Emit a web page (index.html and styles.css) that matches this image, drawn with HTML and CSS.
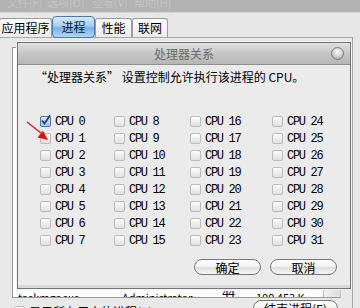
FILE: index.html
```html
<!DOCTYPE html>
<html>
  <head>
    <meta charset="utf-8" />
    <title>Windows 任务管理器 - 处理器关系</title>
    <link rel="stylesheet" href="styles.css">
  </head>
  <body>
    <div id="screen">
      <div id="menubar">
        <span>文件(F)</span>
        <span>选项(O)</span>
        <span>查看(V)</span>
        <span>帮助(H)</span>
      </div>

      <div id="tabs">
        <div class="tab apps">应用程序</div>
        <div class="tab procs selected">进程</div>
        <div class="tab perf">性能</div>
        <div class="tab net">联网</div>
      </div>

      <div id="page">
        <div id="processList">
          <div class="rows">
            <div class="row">
              <span class="name">taskmgr.exe</span>
              <span class="user">Administrator</span>
              <span class="cpu">44</span>
              <span class="mem">100 453 K</span>
            </div>
          </div>
          <div class="vscroll"></div>
        </div>
        <div id="pageFoot">
          <label class="showAll"><span class="cb"></span>显示所有用户的进程(S)</label>
          <button class="aqua endProc">结束进程(E)</button>
        </div>
      </div>

      <!-- dialog sits over the task manager window -->
      <div id="affinity">
        <div class="titlebar">
          <span></span>
          <span class="title">处理器关系</span>
          <span class="close"></span>
        </div>
        <div class="body">
          <p class="intro">“处理器关系” 设置控制允许执行该进程的 CPU。</p>
          <div id="cpus"></div>
          <div class="actions">
            <button class="aqua">确定</button>
            <button class="aqua">取消</button>
          </div>
        </div>
      </div>

      <svg id="pointer" width="34" height="32" viewBox="0 0 34 32">
        <line x1="7" y1="7" x2="21" y2="18" stroke="#e01010" stroke-width="1.2" />
        <polygon points="28,25 17.5,22.5 22.9,15.8" fill="#e01010" />
      </svg>
    </div>

    <script>
      var cpus = document.getElementById("cpus");
      var html = "";
      for (var i = 0; i < 32; ++i) {
        var box = '<span class="cb"></span>';
        if (i == 0) {
          box =
            '<span class="cb checked"><svg width="11" height="11" viewBox="0 0 11 11">' +
            '<path d="M2 5.5 L4.5 8.5 L10 0.5" fill="none" stroke="#1d3f78" stroke-width="1.8" /></svg></span>';
        }
        html += '<div class="cpu">' + box + "<span>CPU " + i + "</span></div>";
      }
      cpus.innerHTML = html;
    </script>
  </body>
</html>
```

FILE: styles.css
```css
* {
  box-sizing: border-box;
}
body {
  margin: 0;
  background: #e7e7e7;
  font-family: "Noto Sans CJK SC", sans-serif;
  font-size: 12px;
  color: #000;
}
#screen {
  position: relative;
  width: 360px;
  height: 308px;
  overflow: hidden;
}

/* menu bar, mostly cut off at the top */
#menubar {
  height: 13px;
  overflow: hidden;
  display: flex;
  padding-left: 7px;
  background: #b3b3b3;
  border-bottom: 1px solid #d4d4d4;
  color: #c4c4c4;
  font-size: 11px;
  line-height: 12px;
}
#menubar span {
  margin-top: -4px;
  width: 40px;
}
#menubar span:nth-child(2) {
  width: 45px;
}
#menubar span:nth-child(3) {
  width: 42px;
}

/* tabs */
#tabs {
  display: flex;
  align-items: flex-end;
  height: 24px;
  margin-left: -1px;
}
.tab {
  height: 19px;
  line-height: 17px;
  text-align: center;
  border: 1px solid #9b9b9b;
  border-bottom: none;
  border-radius: 3px 3px 0 0;
  background: linear-gradient(#ffffff, #ececec);
  font-size: 12px;
}
.tab.apps {
  width: 53px;
}
.tab.procs {
  width: 43px;
}
.tab.perf {
  width: 37px;
}
.tab.net {
  width: 36px;
}
.tab.selected {
  position: relative;
  z-index: 1;
  height: 22px;
  margin-bottom: -1px;
  line-height: 19px;
  border-color: #4a78b0;
  border-bottom: 1px solid #4a78b0;
  border-radius: 4px;
  background: linear-gradient(#d8e9fa, #a9cbef 45%, #7cb0e6 55%, #b4d6f6);
  color: #0c1f3e;
}

/* the process page under the dialog */
#page {
  height: 271px;
  margin-right: 7px;
  padding: 9px 11px 0 12px;
  border-top: 1px solid #a9a9a9;
  border-right: 1px solid #a3a3a3;
  background: #e9e9e9;
}
#processList {
  height: 251px;
  display: flex;
  overflow: hidden;
  background: #fff;
  border: 1px solid #9a9a9a;
  border-right-color: #c4c4c4;
}
#processList .rows {
  flex: 1;
  display: flex;
  flex-direction: column;
  justify-content: flex-end;
  overflow: hidden;
}
/* only the top of the last row peeks out below the dialog */
#processList .row {
  display: flex;
  height: 6px;
  overflow: hidden;
  padding-left: 5px;
  line-height: 13px;
  font-size: 11px;
  white-space: nowrap;
}
.row .name {
  width: 104px;
}
.row .user {
  width: 100px;
}
.row .cpu {
  width: 34px;
}
.vscroll {
  width: 17px;
  background: linear-gradient(90deg, #f2f2f2, #dcdcdc);
  border-left: 1px solid #bdbdbd;
}
#pageFoot {
  display: flex;
  justify-content: space-between;
  align-items: flex-start;
  padding: 2px 3px 0 2px;
}
.showAll {
  display: flex;
  align-items: center;
  gap: 4px;
  margin-top: 3px;
  font-size: 12px;
}
.endProc {
  width: 85px;
  height: 18px;
}

/* aqua style buttons */
.aqua {
  height: 16px;
  padding: 0;
  border: 1px solid #777;
  border-radius: 9px;
  background: linear-gradient(#ffffff, #f2f2f2 45%, #dedede 55%, #f7f7f7);
  font-family: "Noto Sans CJK SC", sans-serif;
  font-size: 12px;
  line-height: 13px;
  color: #000;
  box-shadow: inset 0 1px 1px #fff;
}

/* checkboxes */
.cb {
  flex: none;
  width: 11px;
  height: 11px;
  border: 1px solid #bcbcbc;
  border-radius: 2px;
  background: linear-gradient(#fdfdfd, #e0e0e0);
}
.cb.checked {
  border-color: #5276ab;
  background: linear-gradient(#e2edf9, #a4c2e8);
}
.cb.checked svg {
  display: block;
  margin: -2px 0 0 -1px;
  overflow: visible;
}

/* processor affinity dialog */
#affinity {
  position: absolute;
  left: 17px;
  top: 42px;
  width: 334px;
  height: 247px;
  display: flex;
  flex-direction: column;
  background: #ebebeb;
  border: 1px solid #747474;
  box-shadow: 0 0 0 1px #f6f6f6, inset 0 -3px 0 #dadada;
}
.titlebar {
  height: 22px;
  display: grid;
  grid-template-columns: 1fr auto 1fr;
  align-items: center;
  background: linear-gradient(#e0e0e0, #c6c6c6 50%, #b6b6b6);
  border-bottom: 1px solid #8f8f8f;
  color: #6b6b6b;
}
.titlebar .close {
  justify-self: end;
  margin-right: 6px;
  width: 13px;
  height: 13px;
  border-radius: 50%;
  border: 1px solid #7c7c7c;
  background: radial-gradient(circle at 50% 35%, #fbfbfb, #cdcdcd 55%, #9e9e9e);
}
#affinity .body {
  padding: 5px 13px 0 17px;
}
.intro {
  margin: 0;
  line-height: 14px;
}
#cpus {
  display: grid;
  grid-auto-flow: column;
  grid-template-rows: repeat(8, 17px);
  grid-template-columns: 74px 76px 82px 1fr;
  margin: 29px 0 0 5px;
}
.cpu {
  display: flex;
  align-items: center;
  gap: 4px;
  font-family: "Liberation Mono", monospace;
  font-size: 12px;
  letter-spacing: -1.3px;
}
.actions {
  display: flex;
  justify-content: flex-end;
  gap: 9px;
  margin-top: 10px;
}
.actions .aqua {
  width: 67px;
}

#pointer {
  position: absolute;
  left: 20px;
  top: 115px;
}
```
